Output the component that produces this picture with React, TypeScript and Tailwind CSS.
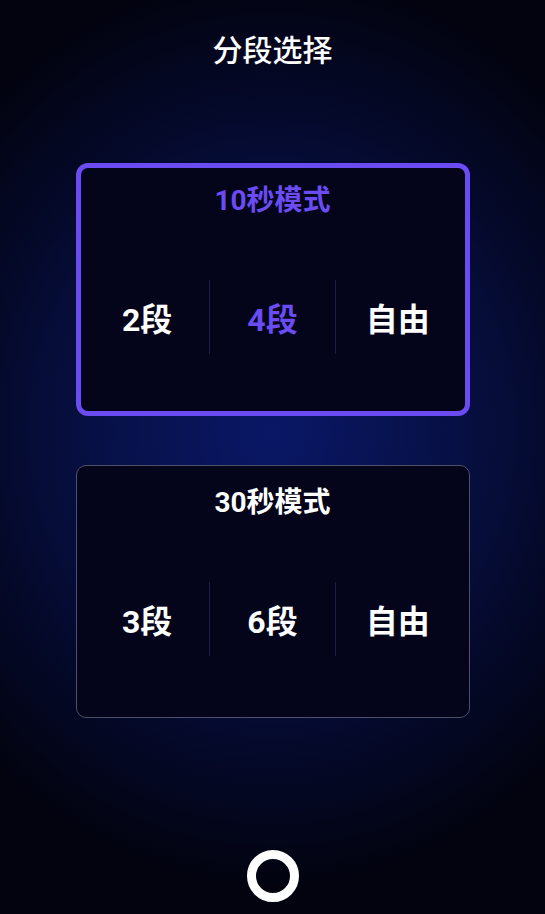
const font = { fontFamily: '"Roboto", "Noto Sans CJK SC", sans-serif' }

type Mode = {
  title: string
  options: string[]
  picked: number
  active: boolean
}

const modes: Mode[] = [
  { title: '10秒模式', options: ['2段', '4段', '自由'], picked: 1, active: true },
  { title: '30秒模式', options: ['3段', '6段', '自由'], picked: -1, active: false },
]

function ModeCard({ mode }: { mode: Mode }) {
  return (
    <div
      className={
        mode.active
          ? 'box-border h-[253px] w-[394px] rounded-[12px] border-[5px] border-[#6a4cf2] bg-[#04041a]'
          : 'box-border h-[253px] w-[394px] rounded-[10px] border border-[#4c5068] bg-[#04041a] p-[4px]'
      }
    >
      <p
        className={
          'mt-[17px] text-center text-[28px] leading-[32px] font-bold ' +
          (mode.active ? 'text-[#6a4cf2]' : 'text-white')
        }
      >
        {mode.title}
      </p>
      <div className="mx-auto mt-[63px] flex h-[74px] w-[375px]">
        {mode.options.map((opt, i) => (
          <div
            key={opt}
            className={
              'flex flex-1 items-center justify-center pt-[6px] text-[32px] leading-[40px] font-bold ' +
              (i > 0 ? 'border-l border-[#1d2040] ' : '') +
              (i === mode.picked ? 'text-[#6a4cf2]' : 'text-white')
            }
          >
            {opt}
          </div>
        ))}
      </div>
    </div>
  )
}

export default function App() {
  return (
    <div
      style={font}
      className="flex h-[914px] w-full flex-col items-center overflow-hidden bg-[radial-gradient(ellipse_75%_50%_at_50%_47%,#0a1766_0%,#071148_40%,#040826_75%,#02030f_100%)]"
    >
      <h1 className="mt-[33px] text-[30px] leading-[36px] font-medium text-white">分段选择</h1>

      <div className="mt-[94px]">
        <ModeCard mode={modes[0]} />
      </div>
      <div className="mt-[49px]">
        <ModeCard mode={modes[1]} />
      </div>

      {/* record button */}
      <div className="mt-[132px] box-border h-[52px] w-[52px] rounded-full border-[9px] border-white" />
    </div>
  )
}
